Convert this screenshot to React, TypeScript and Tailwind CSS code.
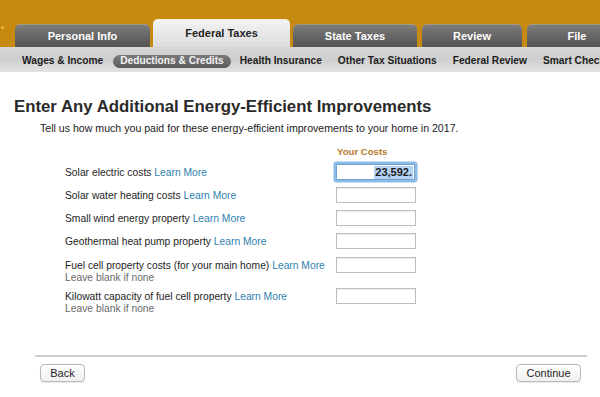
import React from "react";

const tabs = [
  { label: "Personal Info", w: "w-[135px]", active: false, ml: "ml-[15px]" },
  { label: "Federal Taxes", w: "w-[137px]", active: true, ml: "ml-[3px]" },
  { label: "State Taxes", w: "w-[124px]", active: false, ml: "ml-[3px]" },
  { label: "Review", w: "w-[100px]", active: false, ml: "ml-[5px]" },
  { label: "File", w: "w-[100px]", active: false, ml: "ml-[5px]" },
];

const subnav = [
  "Wages & Income",
  "Deductions & Credits",
  "Health Insurance",
  "Other Tax Situations",
  "Federal Review",
  "Smart Check",
];

type Row = { label: string; note?: boolean; mt: string; value?: string };

const rows: Row[] = [
  { label: "Solar electric costs", mt: "mt-[6px]", value: "23,592." },
  { label: "Solar water heating costs", mt: "mt-[7px]" },
  { label: "Small wind energy property", mt: "mt-[7px]" },
  { label: "Geothermal heat pump property", mt: "mt-[7px]" },
  { label: "Fuel cell property costs (for your main home)", mt: "mt-[8px]", note: true },
  { label: "Kilowatt capacity of fuel cell property", mt: "mt-[4px]", note: true },
];

export default function App() {
  return (
    <div className="w-[600px] h-[397px] overflow-hidden bg-white font-['Liberation_Sans',Arial,sans-serif] text-[#222]">
      {/* top orange band with tabs */}
      <div className="relative h-[47px] bg-[#c78a10] flex items-end whitespace-nowrap">
        <div className="absolute left-[1px] top-[26px] w-[3px] h-[3px] rounded-full bg-[#f0b84a]" />
        {tabs.map((t) =>
          t.active ? (
            <div
              key={t.label}
              className={`${t.ml} ${t.w} shrink-0 h-[28px] rounded-t-[5px] bg-gradient-to-b from-[#f3f3f3] to-[#dcdcdc] border-t border-[#fbf3dd] flex items-center justify-center text-[11px] font-bold text-[#1e1e1e]`}
            >
              {t.label}
            </div>
          ) : (
            <div
              key={t.label}
              className={`${t.ml} ${t.w} shrink-0 h-[23px] rounded-t-[5px] bg-gradient-to-b from-[#7c7c7c] via-[#676767] to-[#545454] border-t border-[#a39a88] flex items-center justify-center text-[11px] font-bold text-white`}
            >
              {t.label}
            </div>
          )
        )}
      </div>

      {/* sub navigation */}
      <div className="h-[25px] bg-gradient-to-b from-[#d6d6d6] via-[#cfcfcf] to-[#e2e2e2] flex items-center pt-[3px] pl-[14px] whitespace-nowrap">
        {subnav.map((s) =>
          s === "Deductions & Credits" ? (
            <div
              key={s}
              className="shrink-0 h-[13px] ml-[2px] mr-[1px] px-[7px] rounded-full bg-gradient-to-b from-[#7a7a7a] to-[#5c5c5c] flex items-center text-[10.2px] font-bold text-[#f2f2f2]"
            >
              {s}
            </div>
          ) : (
            <div key={s} className="shrink-0 px-[8px] text-[10.2px] font-bold text-[#1c1c1c]">
              {s}
            </div>
          )
        )}
      </div>

      {/* content */}
      <div className="pt-[25px]">
        <h1 className="pl-[14px] text-[16.8px] leading-[20px] font-bold text-[#2a2a2a]">
          Enter Any Additional Energy-Efficient Improvements
        </h1>
        <p className="mt-[5px] pl-[40px] text-[10.6px] leading-[13px] text-[#222]">
          Tell us how much you paid for these energy-efficient improvements to your home in 2017.
        </p>
        <div className="mt-[11px] pl-[337px] text-[9.6px] leading-[12px] font-bold text-[#b57a2c]">
          Your Costs
        </div>

        <div className="pl-[65px]">
          {rows.map((r) => (
            <div key={r.label} className={`${r.mt} flex items-start`}>
              <div className="w-[271px] pt-[2px]">
                <div className="text-[10.3px] leading-[13px] text-[#1e1e1e] whitespace-nowrap">
                  {r.label} <span className="text-[#2f7fae]">Learn More</span>
                </div>
                {r.note && (
                  <div className="text-[10.3px] leading-[12px] text-[#6a6a6a]">Leave blank if none</div>
                )}
              </div>
              {r.value ? (
                <div className="w-[79px] h-[16px] bg-white border border-[#6f9fd0] rounded-[1px] shadow-[0_0_0_2.5px_#8dbbe9] flex items-center justify-end pr-[1px]">
                  <span className="bg-[#b4d3f5] text-[11px] leading-[13px] font-bold text-[#1b1b1b] px-[1px]">
                    {r.value}
                  </span>
                </div>
              ) : (
                <div className="w-[80px] h-[16px] bg-white border border-[#bdbdbd] shadow-[inset_0_1px_1px_rgba(0,0,0,0.08)]" />
              )}
            </div>
          ))}
        </div>

        <div className="ml-[35px] w-[552px] mt-[40px]">
          <div className="h-[2px] bg-[#cdcdcd]" />
          <div className="mt-[7px] flex justify-between pl-[5px] pr-[6px]">
            <button className="w-[45px] h-[18px] rounded-[4px] border border-[#b9b9b9] bg-gradient-to-b from-white to-[#f0f0f0] shadow-[0_1px_1px_rgba(0,0,0,0.08)] text-[11px] text-[#1e1e1e] flex items-center justify-center">
              Back
            </button>
            <button className="w-[65px] h-[18px] rounded-[4px] border border-[#b9b9b9] bg-gradient-to-b from-white to-[#f0f0f0] shadow-[0_1px_1px_rgba(0,0,0,0.08)] text-[11px] text-[#1e1e1e] flex items-center justify-center">
              Continue
            </button>
          </div>
        </div>
      </div>
    </div>
  );
}
